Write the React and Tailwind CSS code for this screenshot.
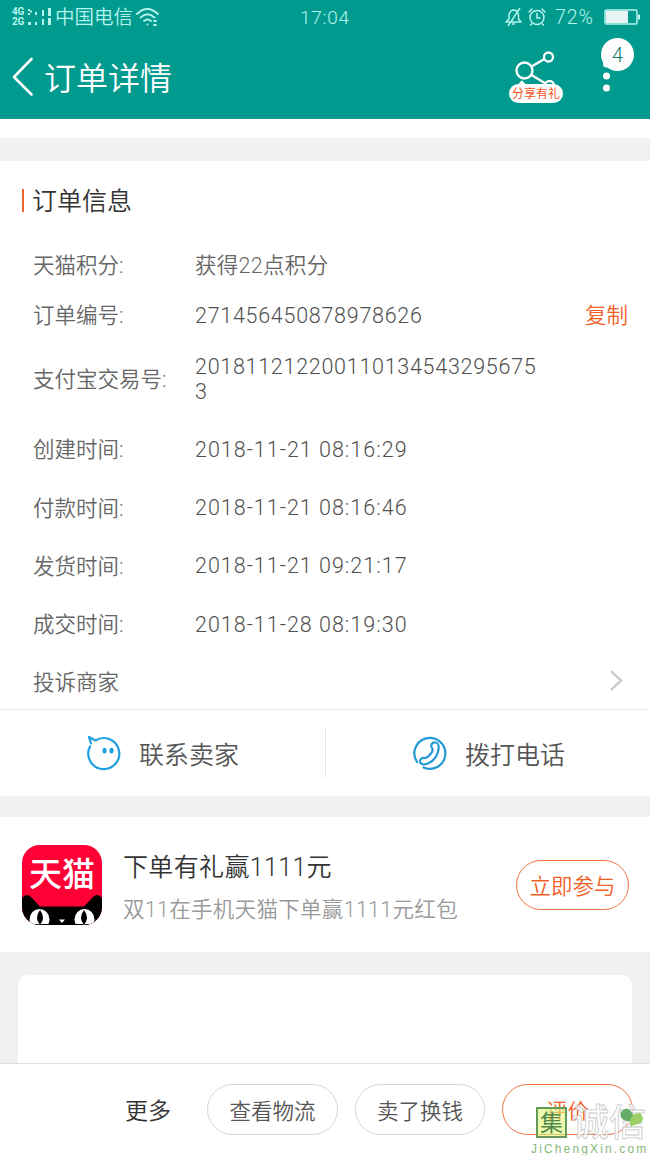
import React from 'react'

const details = [
    { label: '天猫积分:', value: '获得22点积分', row: 'h-[50px]', text: 'tracking-[0.3px] pt-px' },
    { label: '订单编号:', value: '271456450878978626', row: 'h-[50px]', text: 'tracking-[0.72px] text-[#505050]', copy: true },
    { label: '支付宝交易号:', value: '2018112122001101345432956753', row: 'h-[77px] mb-[3px]', text: 'tracking-[0.72px] text-[#505050]' },
    { label: '创建时间:', value: '2018-11-21 08:16:29', row: 'h-[58.3px]', text: 'tracking-[1px] text-[#505050]' },
    { label: '付款时间:', value: '2018-11-21 08:16:46', row: 'h-[58.3px]', text: 'tracking-[1px] text-[#505050]' },
    { label: '发货时间:', value: '2018-11-21 09:21:17', row: 'h-[58.3px]', text: 'tracking-[1px] text-[#505050]' },
    { label: '成交时间:', value: '2018-11-28 08:19:30', row: 'h-[58.3px]', text: 'tracking-[1px] text-[#505050]' },
]

const StatusBar = () => (
    <div className="flex h-[34px] items-center pl-3 pr-[9px] text-[#b5f5ec]">
        <div className="w-4 text-[10px] font-bold leading-[10px] tracking-tight font-['Roboto',sans-serif]">
            <div>4G</div>
            <div>2G</div>
        </div>
        <svg width="24" height="20" viewBox="0 0 24 20" fill="currentColor">
            <path d="M0 2h2v2H0zM2 3.5h2v2H2zM0 6h2v2H0zM0 15h3v3H0zM7 5h2v3H7zM7 15h2v3H7zM14 3h2v6h-2zM14 12h2v6h-2zM20 1h3v8h-3zM20 11h3v7h-3z" />
        </svg>
        <span className="ml-[3px] w-[78px] whitespace-nowrap pt-[2px] text-[19.5px] leading-none">中国电信</span>
        <svg className="ml-[3px]" width="24" height="20" viewBox="0 0 24 20" fill="none" stroke="currentColor" strokeWidth="1.8" strokeLinecap="round">
            <path d="M1 7Q11 -3 22 7M4.500 10.500Q11.500 4 18.500 10.500M8 14Q11.500 11 15 14" />
            <path d="M11.500 17.500h.1M18 14h2M18 18h2" />
        </svg>
        <span className="ml-[140px] w-[52px] text-[19px] leading-none tracking-[0.7px]">17:04</span>
        <svg className="ml-[152px]" width="20" height="20" viewBox="0 0 20 20" fill="none" stroke="currentColor" strokeWidth="1.5" strokeLinejoin="round">
            <path d="M2 15h15l-2.500-3V8Q14 3.500 10 3Q6 3 5 8v4zM8 17h3M16 1 4 19" />
        </svg>
        <svg className="ml-[3px]" width="20" height="20" viewBox="0 0 20 20" fill="none" stroke="currentColor" strokeWidth="1.5" strokeLinecap="round">
            <circle cx="10" cy="10.500" r="7" />
            <path d="M10 6.500v4.500h3M2 5l3-3M15 2l3 3M4.500 17l-1 1M15.500 17l1 1" />
        </svg>
        <span className="ml-[8px] w-[40px] pt-px text-[19.5px] leading-none tracking-[0.9px]">72%</span>
        <svg className="ml-auto" width="37" height="18" viewBox="0 0 37 18" fill="none">
            <rect x="1" y="2" width="32" height="14" rx="1.500" stroke="currentColor" strokeWidth="1.500" />
            <rect x="2" y="3" width="22" height="12" fill="#e8f5f4" />
            <path d="M35 6.500v5" stroke="currentColor" strokeWidth="2" />
        </svg>
    </div>
)

const NavBar = () => (
    <div className="flex h-[85px] items-center pl-3 text-white">
        <svg width="22" height="40" viewBox="0 0 22 40" fill="none" stroke="currentColor" strokeWidth="2.600" strokeLinecap="round" strokeLinejoin="round">
            <path d="M19.500 2 2 20l17.500 17.500" />
        </svg>
        <h1 className="ml-[10px] pt-1 text-[32px] leading-none">订单详情</h1>
        <div className="relative ml-auto h-[85px] w-[142px]">
            <svg className="absolute left-0 top-[14px]" width="56" height="44" viewBox="0 0 56 44" fill="none" stroke="currentColor" strokeWidth="2.300">
                <circle cx="16.500" cy="22.500" r="8" />
                <circle cx="40.500" cy="9" r="4.500" />
                <circle cx="41.500" cy="37.500" r="4.500" />
                <path d="m23.500 18.500 13-7.500M23.500 27l14 8.500M10 38l4-4 4 4" />
            </svg>
            <span className="absolute left-px top-[50px] flex h-[19px] w-[54px] items-center justify-center rounded-full bg-white pt-px text-[12px] font-normal leading-none text-[#f4551c]">分享有礼</span>
            <svg className="absolute left-[94px] top-[25px]" width="10" height="40" viewBox="0 0 10 40" fill="currentColor">
                <circle cx="4.500" cy="5" r="3.500" />
                <circle cx="4.500" cy="17" r="3.500" />
                <circle cx="4.500" cy="29" r="3.500" />
            </svg>
            <span className="absolute left-[93px] top-[4px] flex size-[33px] items-center justify-center rounded-full bg-white text-[20px] leading-none text-[#14786f]">4</span>
        </div>
    </div>
)

const DetailRow = ({ item }) => (
    <div className={`flex items-center pl-[33px] pr-[22px] text-[21.5px] text-[#666] ${item.row}`}>
        <div className="w-[162px] shrink-0 whitespace-nowrap pt-[2px] leading-none">{item.label}</div>
        <div className={`w-[346px] break-all leading-[25px] ${item.text}`}>{item.value}</div>
        {item.copy && <button className="ml-auto pt-[2px] leading-none text-[#f2601f]">复制</button>}
    </div>
)

const ChatIcon = () => (
    <svg width="36" height="36" viewBox="0 0 36 36" fill="none" stroke="#1f9fe0" strokeWidth="2.200" strokeLinecap="round" strokeLinejoin="round">
        <path d="M5 8.500 3 2l6.500 3.500A15.500 15.500 0 1 1 4 11.500" />
        <path d="M18.500 14.800v1.600M25.500 14.800v1.600" strokeWidth="4" />
    </svg>
)

const PhoneIcon = () => (
    <svg width="36" height="36" viewBox="0 0 36 36" fill="none" stroke="#2398d4" strokeWidth="2.200" strokeLinecap="round" strokeLinejoin="round">
        <path d="M5 27A15.500 15.500 0 1 1 11.500 32.500" />
        <path d="M19.500 12c-1-3 1.500-5 4-4.500 3 .5 3.500 4 3 7-1 6-4.500 11-9.500 13.500-3 1.500-7 2-8.500 0-1.500-2.500 .5-5.500 4-5 2.500 .4 4-1.500 6-4s3-4 1-7z" />
    </svg>
)

const TmallLogo = () => (
    <div className="relative size-[80px] overflow-hidden rounded-[18px] bg-[#ff0036]">
        <div className="pt-[13px] text-center text-[33px] font-medium leading-[34px] text-white">天猫</div>
        <svg className="absolute inset-0" width="80" height="80" viewBox="0 0 80 80">
            <path d="M0 53Q5 47 10 53L18 61.500H62L70 53Q75 47 80 53V80H0z" />
            <ellipse cx="17.500" cy="74.500" rx="10" ry="10.500" fill="#fff" />
            <ellipse cx="62.500" cy="74.500" rx="10" ry="10.500" fill="#fff" />
            <path d="M18 65q-6 8 0 15q6-7 0-15zM62 65q-6 8 0 15q6-7 0-15zM0 79h80V80H0z" />
            <path d="M37 74.500h6L40 78z" fill="#fff" />
        </svg>
    </div>
)

const Watermark = () => (
    <div className="absolute left-[530px] top-[1095px] h-[60px] w-[120px]">
        <div className="absolute left-[6px] top-[12px] flex size-[31px] items-center justify-center border-2 border-[#659b59] bg-[#dff779]/60 pt-0.5 text-[23px] font-normal leading-none text-[#52894c]">集</div>
        <svg className="absolute left-[38px] top-0" width="82" height="60" viewBox="0 0 82 60">
            <text x="4" y="41" fontSize="37" fontWeight="500" fill="#fff" fillOpacity="0.7" stroke="#c9c9c9" strokeWidth="0.800">诚信</text>
            <path d="M65 26Q50 27 53 17Q59 9 65 19z" fill="#65ae69" />
            <path d="M62 31Q61 18 72 18Q81 28 62 31z" fill="#9bce64" />
        </svg>
        <div className="absolute left-px top-[48px] whitespace-nowrap text-[12px] leading-[12px] tracking-[2.15px] text-[#83b878] font-['Liberation_Sans',sans-serif]">JiChengXin.com</div>
    </div>
)

const App = () => (
    <div className="relative flex h-[1155px] w-[650px] flex-col overflow-hidden bg-[#f1f1f1] font-['Roboto','Noto_Sans_CJK_SC',sans-serif] font-[350]">
        <header className="h-[119px] shrink-0 bg-[#009a8e]">
            <StatusBar />
            <NavBar />
        </header>
        <div className="h-[19px] shrink-0 bg-white" />

        <section className="mt-[23px] h-[635px] shrink-0 bg-white">
            <div className="flex h-[79px] items-center pl-[22px]">
                <div className="h-[23px] w-[2px] bg-[#f0642c]" />
                <h2 className="ml-[8px] pt-[2px] text-[25px] leading-none text-[#333]">订单信息</h2>
            </div>
            {details.map(item => <DetailRow key={item.label} item={item} />)}
            <div className="flex h-[57px] items-center justify-between border-b border-[#eaeaea] pl-[33px] pr-[27px] text-[21.5px] text-[#666]">
                <span className="pt-1 leading-none">投诉商家</span>
                <svg width="14" height="22" viewBox="0 0 14 22" fill="none" stroke="#c7c7c7" strokeWidth="2.400">
                    <path d="m2 1 10 9.500L2 20" />
                </svg>
            </div>
            <div className="flex h-[86px] items-center text-[25px] text-[#555]">
                <div className="flex h-[50px] w-[326px] items-center border-r border-[#e6e6e6] pl-[86px]">
                    <ChatIcon />
                    <span className="ml-[17px] pt-[5px] leading-none">联系卖家</span>
                </div>
                <div className="flex items-center pl-[86px]">
                    <PhoneIcon />
                    <span className="ml-[17px] pt-[5px] leading-none">拨打电话</span>
                </div>
            </div>
        </section>

        <section className="mt-[21px] flex h-[135px] shrink-0 items-center bg-white pl-[22px] pr-[21px]">
            <TmallLogo />
            <div className="ml-[21px] pt-[12px]">
                <div className="text-[25px] leading-[36px] tracking-[0.35px] text-[#333]">下单有礼赢1111元</div>
                <div className="mt-[3px] text-[21.5px] leading-[42px] tracking-[0.3px] text-[#999]">双11在手机天猫下单赢1111元红包</div>
            </div>
            <button className="ml-auto h-[50px] w-[113px] rounded-full border border-[#ee7443] pt-[5px] text-[21.5px] leading-none text-[#f2601f]">立即参与</button>
        </section>

        <div className="mx-[18px] mt-[23px] h-[88px] shrink-0 rounded-t-[10px] bg-white" />

        <footer className="flex h-[92px] shrink-0 items-center border-t border-[#dedede] bg-white pl-[125px] text-[21.5px] text-[#555]">
            <span className="w-[82px] pt-1 text-[23px] leading-none text-[#333]">更多</span>
            <button className="h-[51px] w-[131px] rounded-full border border-[#d5d5d5] pt-1 leading-none">查看物流</button>
            <button className="ml-[17px] h-[51px] w-[130px] rounded-full border border-[#d5d5d5] pt-1 leading-none">卖了换钱</button>
            <button className="ml-[17px] h-[51px] w-[131px] rounded-full border border-[#ee7443] pt-1 leading-none text-[#f2601f]">评价</button>
        </footer>
        <Watermark />
    </div>
)

export default App
